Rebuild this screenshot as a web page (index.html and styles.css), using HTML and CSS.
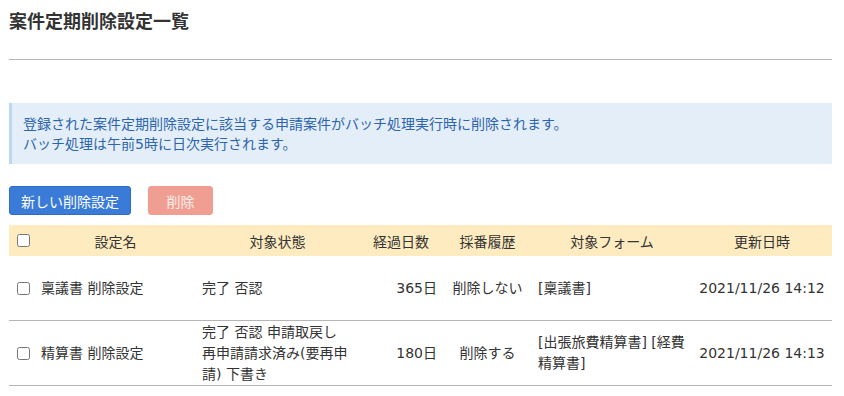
FILE: index.html
```html
<!DOCTYPE html>
<html lang="ja">
<head>
  <meta charset="UTF-8" />
  <meta name="viewport" content="width=device-width, initial-scale=1.0"/>
  <title>案件定期削除設定一覧</title>
  <link rel="stylesheet" href="styles.css">
</head>
<body>
  <div class="page">
    <h1 class="page-title">案件定期削除設定一覧</h1>
    <hr class="divider">

    <div class="info">
      登録された案件定期削除設定に該当する申請案件がバッチ処理実行時に削除されます。<br>
      バッチ処理は午前5時に日次実行されます。
    </div>

    <div class="actions">
      <button type="button" class="btn btn-primary">新しい削除設定</button>
      <button type="button" class="btn btn-danger" disabled>削除</button>
    </div>

    <table class="list">
      <colgroup>
        <col class="c-check">
        <col class="c-name">
        <col class="c-status">
        <col class="c-days">
        <col class="c-history">
        <col class="c-form">
        <col class="c-date">
      </colgroup>
      <thead>
        <tr>
          <th class="check"><input type="checkbox"></th>
          <th>設定名</th>
          <th>対象状態</th>
          <th>経過日数</th>
          <th>採番履歴</th>
          <th>対象フォーム</th>
          <th>更新日時</th>
        </tr>
      </thead>
      <tbody>
        <tr>
          <td class="check"><input type="checkbox"></td>
          <td>稟議書 削除設定</td>
          <td>完了 否認</td>
          <td class="num">365日</td>
          <td class="center">削除しない</td>
          <td>[稟議書]</td>
          <td class="center">2021/11/26 14:12</td>
        </tr>
        <tr>
          <td class="check"><input type="checkbox"></td>
          <td>精算書 削除設定</td>
          <td>完了 否認 申請取戻し 再申請請求済み(要再申請) 下書き</td>
          <td class="num">180日</td>
          <td class="center">削除する</td>
          <td>[出張旅費精算書] [経費精算書]</td>
          <td class="center">2021/11/26 14:13</td>
        </tr>
      </tbody>
    </table>
  </div>
</body>
</html>
```

FILE: styles.css
```css
body {
  margin: 0;
  background: #fff;
  color: #333;
  font-family: "DejaVu Sans", "Noto Sans CJK JP", sans-serif;
  font-size: 14px;
}

.page {
  width: 823px;
  padding: 10px 0 0 9px;
}

.page-title {
  margin: 0;
  font-size: 18px;
  line-height: 24px;
  font-weight: bold;
  color: #333;
}

.divider {
  margin: 25px 0 0;
  border: none;
  border-top: 1px solid #b5b5b5;
  height: 0;
}

.info {
  margin-top: 43px;
  padding: 11px 12px 10px 11px;
  background: #e4eef8;
  border-left: 3px solid #bdd6f1;
  color: #2d65ad;
  line-height: 20px;
}

.actions {
  display: flex;
  gap: 17px;
  margin-top: 22px;
}

.btn {
  height: 29px;
  padding: 0 11px;
  border-radius: 3px;
  font-family: inherit;
  font-size: 14px;
  color: #fff;
  cursor: pointer;
}

.btn-primary {
  background: #3a7bd8;
  border: 1px solid #2f6cc6;
}

.btn-danger {
  min-width: 65px;
  background: #f09e92;
  border: 1px solid #f09e92;
  color: #fdeeea;
  cursor: default;
}

.list {
  margin-top: 10px;
  width: 823px;
  border-collapse: collapse;
  table-layout: fixed;
}

.c-check { width: 26px; }
.c-name { width: 161px; }
.c-status { width: 163px; }
.c-days { width: 84px; }
.c-history { width: 89px; }
.c-form { width: 160px; }
.c-date { width: 140px; }

.list th {
  height: 31px;
  padding: 0 6px;
  background: #feecc0;
  font-weight: normal;
  text-align: center;
}

.list td {
  height: 64px;
  padding: 0 6px;
  line-height: 21px;
  border-bottom: 1px solid #b5b5b5;
  vertical-align: middle;
}

.list .check {
  padding: 0 0 0 8px;
  text-align: left;
}

.list input[type="checkbox"] {
  display: block;
  width: 13px;
  height: 13px;
  margin: 0;
}

.list .num {
  text-align: right;
}

.list .center {
  text-align: center;
}
```
